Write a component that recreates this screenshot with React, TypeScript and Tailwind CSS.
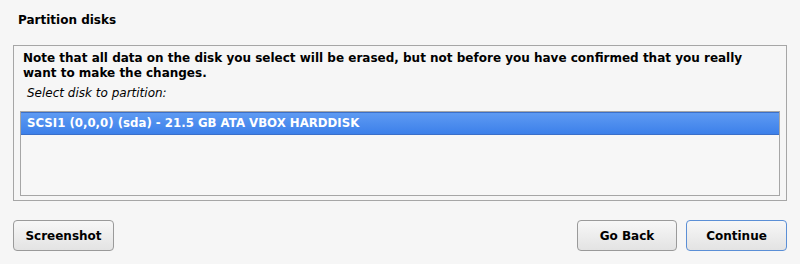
export default function App() {
  return (
    <div
      className="flex h-[264px] w-[800px] flex-col bg-[#f6f6f6] text-[12px] text-black"
      style={{ fontFamily: '"DejaVu Sans", Verdana, sans-serif' }}
    >
      <div className="h-[45px] px-[18px] pt-[11px] font-bold">Partition disks</div>

      <div className="mx-[13px] flex h-[156px] flex-col border border-[#a6a6a6] px-[6px] pt-[5px]">
        <p className="px-[3px] font-bold leading-[15px]">
          Note that all data on the disk you select will be erased, but not before you have confirmed that you really
          want to make the changes.
        </p>
        <p className="mt-[4px] px-[7px] italic leading-[16px]">Select disk to partition:</p>

        <div className="mt-[10px] h-[85px] border border-[#a6a6a6] bg-[#f7f7f7]">
          <div className="flex h-[23px] items-center border-y border-[#3a6fc9] bg-gradient-to-b from-[#5e9af2] to-[#3c80ea] px-[6px] text-[11.75px] font-bold text-white">
            SCSI1 (0,0,0) (sda) - 21.5 GB ATA VBOX HARDDISK
          </div>
        </div>
      </div>

      <div className="mt-[19px] flex px-[13px]">
        <button className="h-[31px] w-[101px] rounded-[4px] border border-[#9a9a9a] bg-gradient-to-b from-[#f7f7f7] to-[#e3e3e3] font-bold">
          Screenshot
        </button>
        <div className="flex-1" />
        <button className="h-[31px] w-[100px] rounded-[4px] border border-[#9a9a9a] bg-gradient-to-b from-[#f7f7f7] to-[#e3e3e3] font-bold">
          Go Back
        </button>
        <button className="ml-[9px] h-[31px] w-[101px] rounded-[4px] border border-[#5b8fd6] bg-gradient-to-b from-[#f7f7f7] to-[#e3e3e3] font-bold">
          Continue
        </button>
      </div>
    </div>
  )
}
